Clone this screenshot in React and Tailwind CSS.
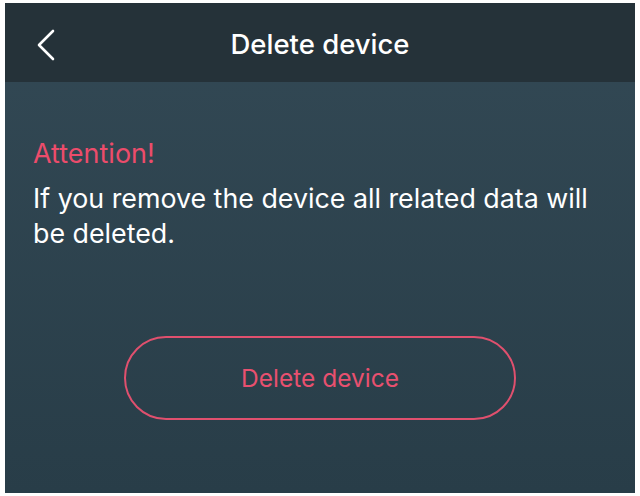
import React from 'react';

const BackIcon = () => (
  <svg width="20" height="32" viewBox="0 0 20 32" fill="none">
    <path d="M17 2 L3 16 L17 30" stroke="white" strokeWidth="2.6" strokeLinecap="round" strokeLinejoin="round" />
  </svg>
);

const App = () => {
  return (
    <div className="w-[640px] h-[496px] bg-white pt-[3px] px-[5px] overflow-hidden" style={{ fontFamily: 'Inter, "Noto Sans", sans-serif' }}>
      <div className="h-[490px] flex flex-col bg-gradient-to-b from-[#334955] to-[#283d48]">
        {/* header */}
        <div className="h-[79px] bg-[#253239] flex items-center relative shrink-0 pt-[4px]">
          <div className="absolute left-[31px] top-[26px]">
            <BackIcon />
          </div>
          <h1 className="w-full text-center text-white text-[27.5px] font-medium">Delete device</h1>
        </div>

        <div className="px-[28px] pt-[56px]">
          <p className="text-[#ec4c6b] text-[27px] leading-[32px]">Attention!</p>
          <p className="mt-[11px] text-white text-[26.8px] leading-[35px]">
            If you remove the device all related data will be deleted.
          </p>
        </div>

        <div className="flex justify-center pt-[85px]">
          <button className="w-[392px] h-[84px] rounded-full border-2 border-[#e0506e] text-[#e8506f] text-[24.5px]">
            Delete device
          </button>
        </div>
      </div>
    </div>
  );
};

export default App;
